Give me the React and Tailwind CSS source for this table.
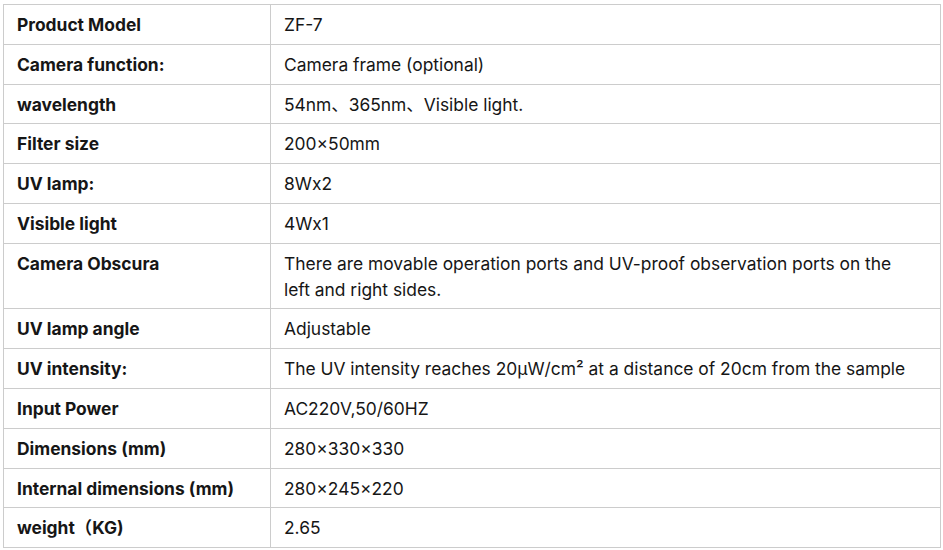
import React from 'react';

const rows = [
  ['Product Model', 'ZF-7'],
  ['Camera function:', 'Camera frame (optional)'],
  ['wavelength', '54nm、365nm、Visible light.'],
  ['Filter size', '200×50mm'],
  ['UV lamp:', '8Wx2'],
  ['Visible light', '4Wx1'],
  ['Camera Obscura', 'There are movable operation ports and UV-proof observation ports on the left and right sides.'],
  ['UV lamp angle', 'Adjustable'],
  ['UV intensity:', 'The UV intensity reaches 20μW/cm² at a distance of 20cm from the sample'],
  ['Input Power', 'AC220V,50/60HZ'],
  ['Dimensions (mm)', '280×330×330'],
  ['Internal dimensions (mm)', '280×245×220'],
  ['weight（KG)', '2.65'],
];

const App = () => {
  return (
    <div className="w-[943px] h-[550px] bg-white pl-[3px] pt-[4px] overflow-hidden" style={{ fontFamily: 'Inter, "Noto Sans CJK SC", sans-serif' }}>
      <table className="w-[938px] border-collapse text-[17.4px] text-[#161616]">
        <tbody>
          {rows.map(([label, value]) => (
            <tr key={label}>
              {/* left column holds bold labels */}
              <td className="w-[267px] border border-[#cccccc] pl-[13px] pr-2 pt-[7px] pb-[6px] leading-[25.8px] font-bold align-top">
                {label}
              </td>
              <td className="border border-[#cccccc] pl-[13px] pr-8 pt-[7px] pb-[6px] leading-[25.8px] align-top">
                {value}
              </td>
            </tr>
          ))}
        </tbody>
      </table>
    </div>
  );
};

export default App;
